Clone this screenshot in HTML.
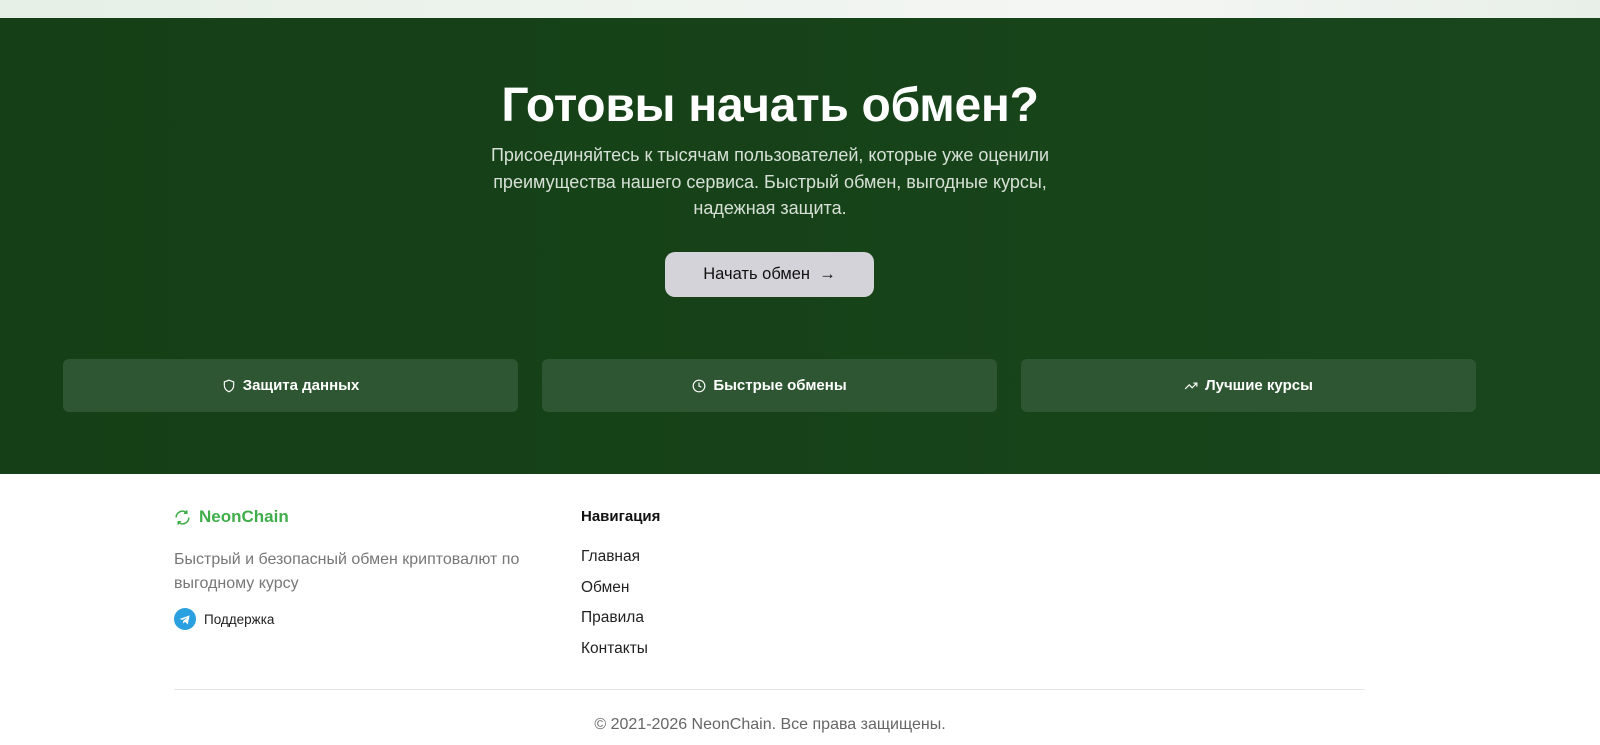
<!DOCTYPE html>
<html><head><meta charset="utf-8"><style>
*{margin:0;padding:0;box-sizing:border-box}
body{width:1600px;height:745px;overflow:hidden;background:#fff;font-family:"Liberation Sans","DejaVu Sans",sans-serif;position:relative}
.top{height:18px;background:linear-gradient(90deg,#e6f0e6,#f4f6f4 70%,#e8efe8)}
.hero{height:456px;background:linear-gradient(90deg,#153f16,#19461c);position:relative;color:#fff}
.c{position:absolute;left:370px;width:800px;text-align:center}
h1{top:60px;font-size:48px;font-weight:700;letter-spacing:-0.3px}
.sub{top:124px;font-size:18px;line-height:26.5px;color:#d6e0d6}
.btn{position:absolute;left:665px;top:234px;width:209px;height:45px;background:#d4d3da;border-radius:10px;color:#111;font-size:16.5px;line-height:45px;text-align:center}
.card{position:absolute;top:341px;width:455px;height:53px;background:#2e5632;border-radius:6px;font-size:15px;font-weight:700;display:flex;align-items:center;justify-content:center;gap:7px}
.card svg{width:14px;height:14px}
.f{position:absolute;font-size:15px}
</style></head><body>
<div class="top"></div>
<div class="hero">
<h1 class="c">Готовы начать обмен?</h1>
<div class="c sub">Присоединяйтесь к тысячам пользователей, которые уже оценили<br>преимущества нашего сервиса. Быстрый обмен, выгодные курсы,<br>надежная защита.</div>
<div class="btn">Начать обмен &nbsp;→</div>
<div class="card" style="left:63px"><svg viewBox="0 0 24 24" fill="none" stroke="#fff" stroke-width="2"><path d="M12 2l8 3v6c0 5-3.5 9-8 11-4.5-2-8-6-8-11V5z"/></svg>Защита данных</div>
<div class="card" style="left:542px"><svg viewBox="0 0 24 24" fill="none" stroke="#fff" stroke-width="2"><circle cx="12" cy="12" r="10"/><path d="M12 6v6l4 2"/></svg>Быстрые обмены</div>
<div class="card" style="left:1021px"><svg viewBox="0 0 24 24" fill="none" stroke="#fff" stroke-width="2"><path d="M2 17l7-7 5 5 8-8M16 7h6v6"/></svg>Лучшие курсы</div>
</div>
<div class="f" style="left:174px;top:507px;color:#3fae4a;font-weight:700;font-size:17px;display:flex;align-items:center;gap:8px"><svg width="17" height="17" viewBox="0 0 24 24" fill="none" stroke="#3fae4a" stroke-width="2.2"><path d="M21 12a9 9 0 0 1-15.5 6.2M3 12a9 9 0 0 1 15.5-6.2M18 2v4h-4M6 22v-4h4"/></svg>NeonChain</div>
<div class="f" style="left:174px;top:548px;color:#777;line-height:24px;font-size:16px">Быстрый и безопасный обмен криптовалют по<br>выгодному курсу</div>
<div class="f" style="left:174px;top:608px;font-size:13.5px;color:#222;display:flex;align-items:center;gap:8px"><svg width="22" height="22" viewBox="0 0 24 24"><circle cx="12" cy="12" r="12" fill="#2aa0e0"/><path d="M6 12l11-4-2 10-3-3-2 2v-3l5-4-6 3z" fill="#fff"/></svg>Поддержка</div>
<div class="f" style="left:581px;top:508px;font-weight:700;color:#111">Навигация</div>
<div class="f" style="left:581px;top:542px;color:#222;line-height:30.6px;font-size:15.5px">Главная<br>Обмен<br>Правила<br>Контакты</div>
<div style="position:absolute;left:174px;top:689px;width:1191px;height:1px;background:#e5e5e5"></div>
<div class="f" style="left:370px;width:800px;top:716px;text-align:center;color:#666;font-size:16px">© 2021-2026 NeonChain. Все права защищены.</div>
</body></html>
